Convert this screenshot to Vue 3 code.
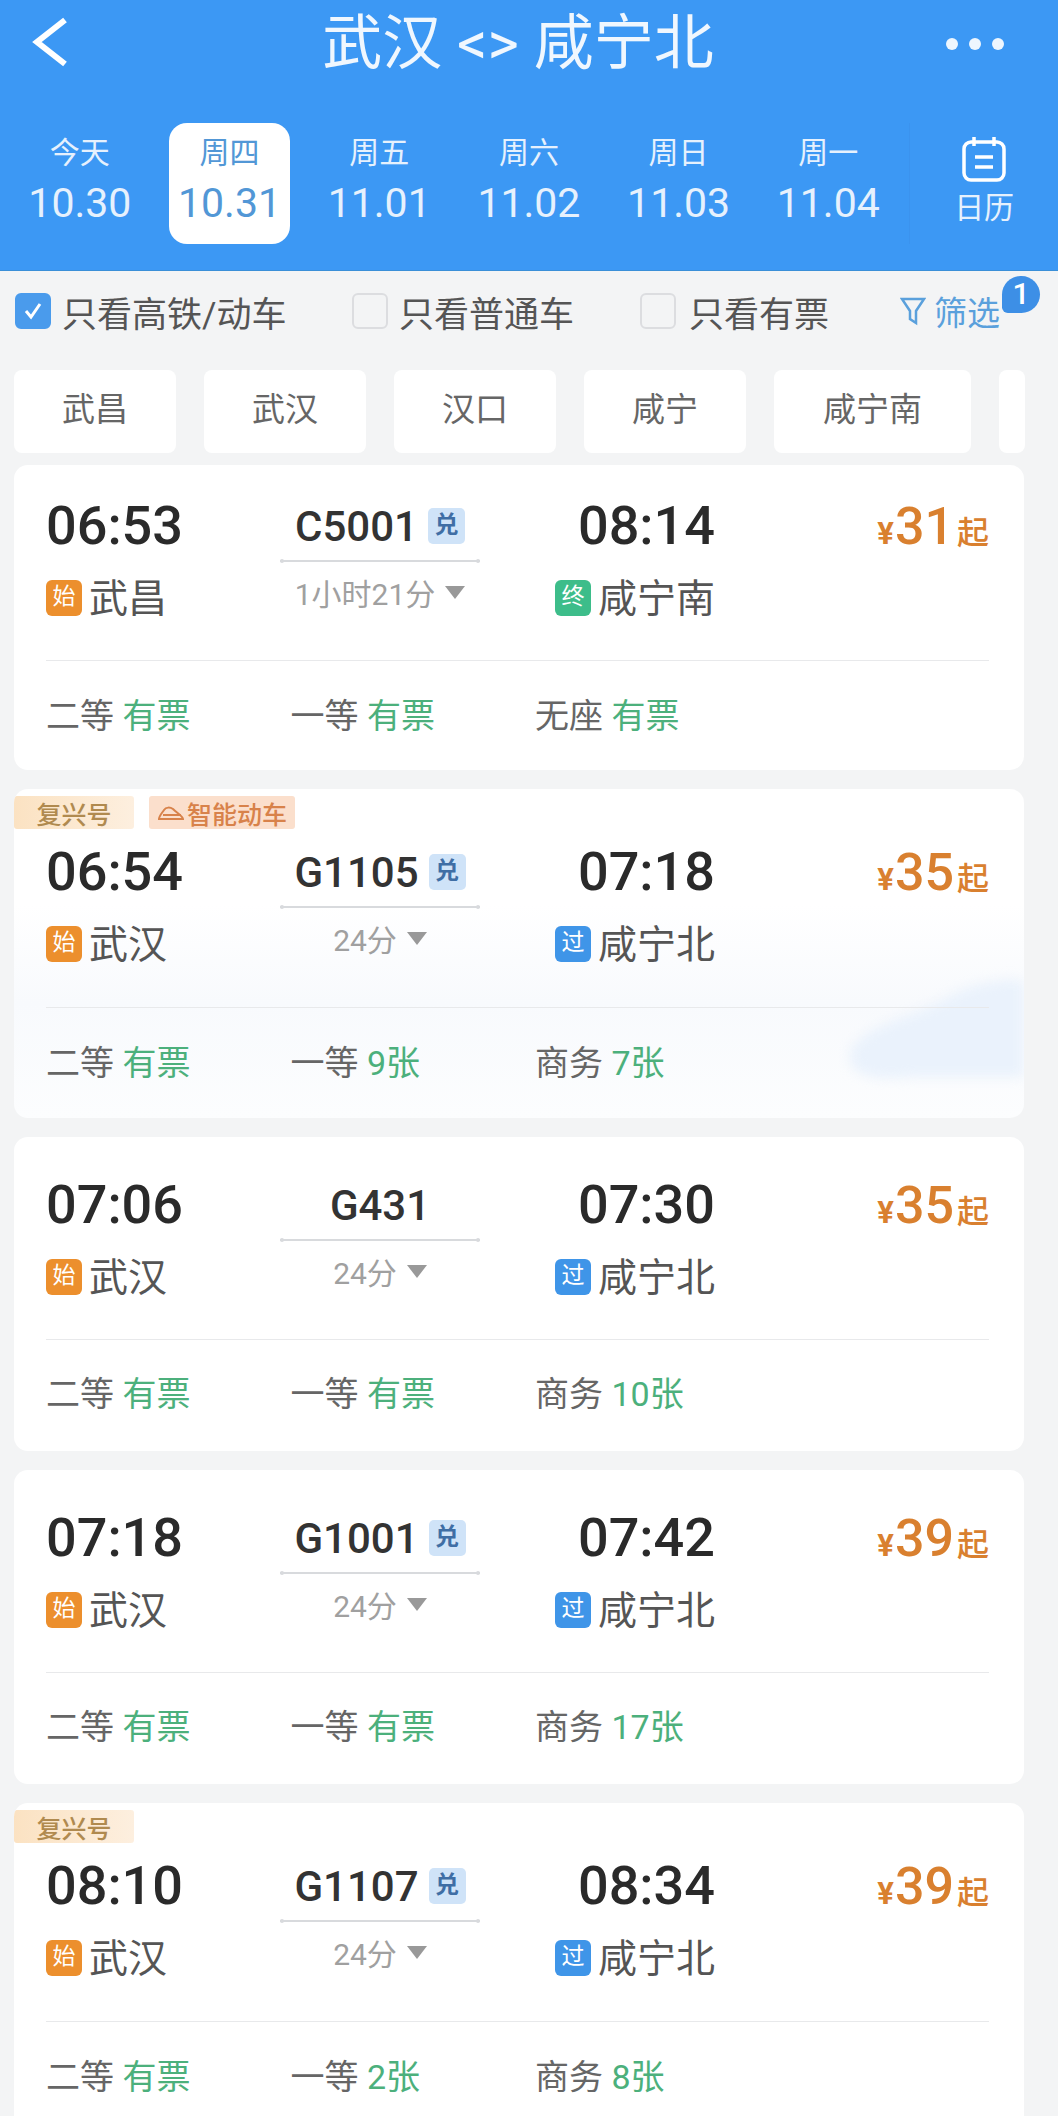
<template>
  <div class="page">
    <header class="header">
      <div class="topbar">
        <svg class="back" width="100" height="88" viewBox="0 0 100 88">
          <path d="M65 20 L37 42 L65 64" fill="none" stroke="#fff" stroke-width="6" />
        </svg>
        <div class="title">武汉 &lt;&gt; 咸宁北</div>
        <div class="more"><i></i><i></i><i></i></div>
      </div>
      <div class="dates">
        <div v-for="d in dates" :key="d.date" class="dateItem" :class="{ active: d.active }">
          <span class="day">{{ d.day }}</span>
          <span class="date">{{ d.date }}</span>
        </div>
        <div class="calendar">
          <svg width="46" height="46" viewBox="0 0 46 46" fill="none" stroke="#fff" stroke-width="3.5">
            <rect x="3" y="6" width="40" height="38" rx="7" />
            <path d="M13 1v9M33 1v9M14 21h18M14 31h18" />
          </svg>
          <span>日历</span>
        </div>
      </div>
    </header>

    <div class="filters">
      <div class="check first"><span class="box on">
        <svg width="24" height="24" viewBox="0 0 24 24"><path d="M5 12l5 6 9-13" fill="none" stroke="#fff" stroke-width="3" /></svg>
      </span>只看高铁/动车</div>
      <div class="check second"><span class="box"></span>只看普通车</div>
      <div class="check third"><span class="box"></span>只看有票</div>
      <div class="filterBtn">
        <svg width="26" height="30" viewBox="0 0 26 30" fill="none" stroke="#5aa0dc" stroke-width="2.5">
          <path d="M2 3h22l-8 12v12l-6-4v-8z" />
        </svg>
        筛选
        <span class="count">1</span>
      </div>
    </div>

    <div class="chips">
      <div v-for="c in stations" :key="c" class="chip">{{ c }}</div>
      <div class="chip wide">咸宁南</div>
      <div class="chip stub"></div>
    </div>

    <div
      v-for="t in trains"
      :key="t.no"
      class="card"
      :class="[t.tags.length ? 'tagged' : (t.first ? '' : 'plain'), { tinted: t.tint }]"
    >
      <svg v-if="t.wave" class="wave" width="174" height="110" viewBox="0 0 174 110">
        <path d="M0 75 C10 50 60 40 90 25 C120 5 160 0 174 5 V100 H60 C20 105 -5 95 0 75z" fill="#eaf2fc" />
      </svg>
      <div v-if="t.tags.length" class="tags">
        <span v-for="tag in t.tags" :key="tag" class="tag" :class="{ smart: tag !== '复兴号' }">
          <svg v-if="tag !== '复兴号'" width="28" height="16" viewBox="0 0 28 16" fill="none" stroke="#d8824a" stroke-width="2">
            <path d="M2 14h24c0-3-6-6-10-10-3-2-7-2-9 1-2 3-5 6-5 9zM6 10h18" />
          </svg>
          {{ tag }}
        </span>
      </div>
      <div class="main">
        <div class="stop">
          <div class="time">{{ t.dep }}</div>
          <div class="station">
            <span class="mark orange">{{ t.depMark }}</span>{{ t.from }}
          </div>
        </div>
        <div class="train">
          <div class="no">
            {{ t.no }}<span v-if="t.swap" class="swap">兑</span>
          </div>
          <div class="line"></div>
          <div class="duration">{{ t.dur }}<i class="arrow"></i></div>
        </div>
        <div class="stop end">
          <div class="time">{{ t.arr }}</div>
          <div class="station">
            <span class="mark" :class="t.arrMark === '终' ? 'green' : 'blue'">{{ t.arrMark }}</span>{{ t.to }}
          </div>
        </div>
        <div class="price"><small>¥</small>{{ t.price }}<em>起</em></div>
      </div>
      <div class="seats">
        <div v-for="s in t.seats" :key="s[0]" class="seat">
          {{ s[0] }} <b>{{ s[1] }}</b>
        </div>
      </div>
    </div>
  </div>
</template>

<script setup>
const dates = [
  { day: "今天", date: "10.30" },
  { day: "周四", date: "10.31", active: true },
  { day: "周五", date: "11.01" },
  { day: "周六", date: "11.02" },
  { day: "周日", date: "11.03" },
  { day: "周一", date: "11.04" },
];

const stations = ["武昌", "武汉", "汉口", "咸宁"];

const trains = [
  {
    no: "C5001", swap: true, first: true, tags: [],
    dep: "06:53", arr: "08:14", from: "武昌", to: "咸宁南", depMark: "始", arrMark: "终",
    dur: "1小时21分", price: 31,
    seats: [["二等", "有票"], ["一等", "有票"], ["无座", "有票"]],
  },
  {
    no: "G1105", swap: true, tint: true, wave: true, tags: ["复兴号", "智能动车"],
    dep: "06:54", arr: "07:18", from: "武汉", to: "咸宁北", depMark: "始", arrMark: "过",
    dur: "24分", price: 35,
    seats: [["二等", "有票"], ["一等", "9张"], ["商务", "7张"]],
  },
  {
    no: "G431", tags: [],
    dep: "07:06", arr: "07:30", from: "武汉", to: "咸宁北", depMark: "始", arrMark: "过",
    dur: "24分", price: 35,
    seats: [["二等", "有票"], ["一等", "有票"], ["商务", "10张"]],
  },
  {
    no: "G1001", swap: true, tags: [],
    dep: "07:18", arr: "07:42", from: "武汉", to: "咸宁北", depMark: "始", arrMark: "过",
    dur: "24分", price: 39,
    seats: [["二等", "有票"], ["一等", "有票"], ["商务", "17张"]],
  },
  {
    no: "G1107", swap: true, tags: ["复兴号"],
    dep: "08:10", arr: "08:34", from: "武汉", to: "咸宁北", depMark: "始", arrMark: "过",
    dur: "24分", price: 39,
    seats: [["二等", "有票"], ["一等", "2张"], ["商务", "8张"]],
  },
];
</script>

<style scoped>
.page {
  height: 2116px;
  overflow: hidden;
  background: #f3f4f5;
  font-family: Roboto, "Noto Sans CJK SC", sans-serif;
}

/* header */
.header {
  height: 271px;
  background: #3c98f4;
  color: #fff;
  border-bottom: 1px solid #3a8fd8;
  box-sizing: border-box;
}
.topbar {
  height: 88px;
  display: flex;
  align-items: center;
}
.back {
  flex: none;
}
.title {
  flex: 1;
  text-align: center;
  font-size: 60px;
  line-height: 88px;
  color: #f0f7fe;
}
.more {
  width: 122px;
  display: flex;
  gap: 11px;
  padding-left: 10px;
  box-sizing: border-box;
}
.more i {
  width: 12px;
  height: 12px;
  border-radius: 50%;
  background: #eef6fe;
}
.dates {
  display: flex;
  margin-top: 35px;
  padding-left: 5px;
}
.dateItem {
  width: 121px;
  height: 121px;
  margin: 0 14.35px;
  padding-top: 12px;
  box-sizing: border-box;
  border-radius: 18px;
  display: flex;
  flex-direction: column;
  align-items: center;
  flex: none;
  color: #e6f1fd;
}
.dateItem.active {
  background: #fff;
  color: #5297d6;
}
.day {
  font-size: 30px;
  line-height: 36px;
}
.date {
  font-size: 41px;
  line-height: 42px;
  margin-top: 11px;
  white-space: nowrap;
}
.calendar {
  flex: none;
  width: 149px;
  margin-left: 6px;
  border-left: 1px solid #3b93ee;
  box-sizing: border-box;
  height: 121px;
  display: flex;
  flex-direction: column;
  align-items: center;
  padding-top: 13px;
  font-size: 30px;
  line-height: 36px;
  color: #e6f1fd;
}
.calendar span {
  margin-top: 8px;
}

/* filter row */
.filters {
  height: 99px;
  padding: 0 0 19px 15px;
  box-sizing: border-box;
  display: flex;
  align-items: center;
  font-size: 35px;
  color: #555;
}
.check {
  display: flex;
  align-items: center;
  gap: 11px;
  flex: none;
}
.first {
  width: 337px;
}
.second {
  width: 288px;
}
.third {
  width: 260px;
  gap: 13px;
}
.box {
  width: 36px;
  height: 36px;
  box-sizing: border-box;
  border: 2px solid #dcdde0;
  border-radius: 6px;
  display: flex;
  align-items: center;
  justify-content: center;
}
.box.on {
  background: #4a9bec;
  border-color: #4a9bec;
}
.filterBtn {
  position: relative;
  display: flex;
  align-items: center;
  gap: 8px;
  font-size: 33px;
  color: #5aa0dc;
}
.count {
  position: absolute;
  left: 102px;
  top: -11px;
  width: 38px;
  height: 37px;
  border-radius: 19px 19px 19px 6px;
  background: #3d8fe6;
  color: #fff;
  font-size: 30px;
  font-weight: 500;
  line-height: 35px;
  text-align: center;
}

/* station chips */
.chips {
  display: flex;
  gap: 28px;
  padding-left: 14px;
}
.chip {
  width: 162px;
  height: 83px;
  flex: none;
  background: #fff;
  border-radius: 8px;
  font-size: 33px;
  line-height: 80px;
  text-align: center;
  color: #666;
}
.chip.wide {
  width: 197px;
}
.chip.stub {
  width: 26px;
}

/* train cards */
.card {
  position: relative;
  overflow: hidden;
  margin: 12px 34px 19px 14px;
  height: 305px;
  padding: 33px 35px 0 32px;
  box-sizing: border-box;
  background: #fff;
  border-radius: 14px;
}
.card.plain {
  height: 314px;
  padding-top: 40px;
  margin-top: 0;
}
.card.tagged {
  height: 329px;
  padding-top: 55px;
  margin-top: 0;
}
.card.tinted {
  background: linear-gradient(#fff 35%, #f8fafd 65%, #fcfdfe);
}
.wave {
  position: absolute;
  right: 0;
  bottom: 31px;
  filter: blur(6px);
}
.tags {
  position: absolute;
  left: 0;
  top: 7px;
  display: flex;
  gap: 15px;
}
.tag {
  height: 33px;
  width: 120px;
  display: flex;
  align-items: center;
  justify-content: center;
  gap: 2px;
  font-size: 25px;
  font-weight: 500;
  color: #b08a4f;
  background: linear-gradient(90deg, #fbe2c2, #fdefdf);
  border-radius: 3px;
}
.tag.smart {
  width: 146px;
  color: #d8824a;
  background: #fbdfcc;
}
.main {
  display: flex;
  position: relative;
  height: 119px;
}
.stop {
  width: 234px;
  flex: none;
  display: flex;
  flex-direction: column;
}
.stop.end {
  width: 180px;
  margin-left: 55px;
  align-items: flex-end;
}
.time {
  font-size: 54px;
  line-height: 56px;
  font-weight: 500;
  color: #2a2a2a;
}
.station {
  margin-top: 23px;
  height: 36px;
  display: flex;
  align-items: center;
  gap: 7px;
  font-size: 39px;
  color: #555;
  white-space: nowrap;
}
.mark {
  width: 36px;
  height: 36px;
  margin-top: 6px;
  flex: none;
  border-radius: 6px;
  color: #fff;
  font-size: 23px;
  line-height: 34px;
  text-align: center;
}
.orange {
  background: #ec8f2d;
}
.green {
  background: #3dbd8a;
}
.blue {
  background: #3f95e8;
}
.train {
  width: 200px;
  flex: none;
  display: flex;
  flex-direction: column;
  align-items: center;
}
.no {
  margin-top: 10px;
  height: 36px;
  display: flex;
  align-items: center;
  font-size: 42px;
  font-weight: 500;
  color: #333;
  white-space: nowrap;
}
.swap {
  width: 37px;
  height: 36px;
  margin-left: 10px;
  border-radius: 5px;
  background: #cfe3f8;
  color: #3f6ea5;
  font-size: 24px;
  font-weight: 700;
  line-height: 34px;
  text-align: center;
}
.line {
  position: relative;
  width: 100%;
  height: 2px;
  margin-top: 16px;
  background: #d8dadd;
}
.line::before,
.line::after {
  content: "";
  position: absolute;
  top: -1px;
  width: 4px;
  height: 4px;
  border-radius: 50%;
  background: #d8dadd;
}
.line::before {
  left: 0;
}
.line::after {
  right: 0;
}
.duration {
  margin-top: 10px;
  height: 40px;
  display: flex;
  align-items: center;
  font-size: 30px;
  color: #a0a0a0;
  white-space: nowrap;
}
.arrow {
  width: 0;
  height: 0;
  margin-left: 10px;
  border-left: 10px solid transparent;
  border-right: 10px solid transparent;
  border-top: 13px solid #999;
}
.price {
  margin-left: auto;
  margin-top: 1px;
  font-size: 52px;
  line-height: 56px;
  height: 56px;
  font-weight: 500;
  color: #d9802f;
  white-space: nowrap;
}
.price small {
  font-size: 31px;
  font-weight: 700;
  margin-right: 1px;
}
.price em {
  font-style: normal;
  font-size: 32px;
  font-weight: 500;
  margin-left: 3px;
}
.seats {
  display: flex;
  align-items: center;
  position: relative;
  height: 111px;
  margin-top: 43px;
  border-top: 1px solid #e8e9eb;
  box-sizing: border-box;
  padding-bottom: 6px;
}
.tagged .seats {
  margin-top: 44px;
}
.plain .seats {
  padding-bottom: 8px;
}
.seat {
  width: 244.5px;
  flex: none;
  font-size: 34px;
  color: #666;
}
.seat b {
  font-weight: 400;
  color: #4cb07c;
}
</style>
